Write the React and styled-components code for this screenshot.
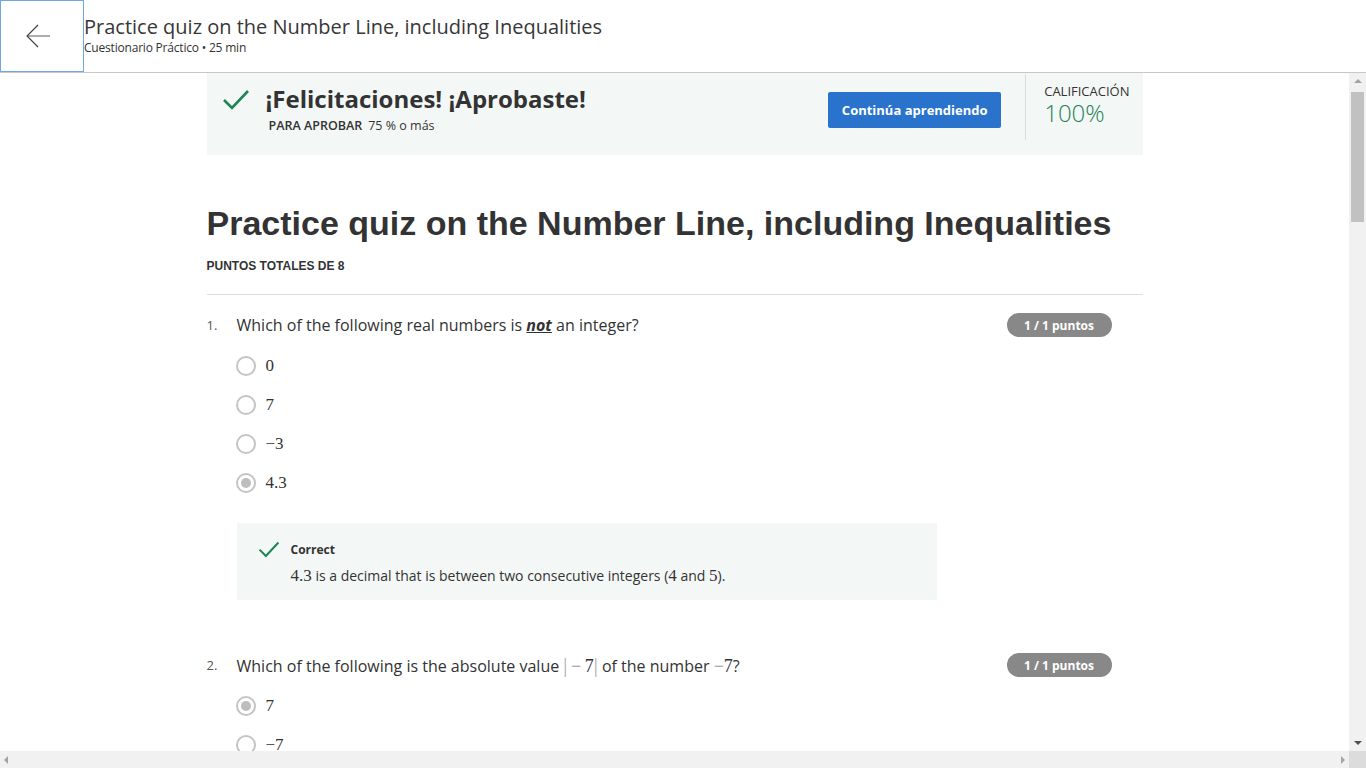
import React from 'react';
import styled, { createGlobalStyle } from 'styled-components';

const GlobalStyle = createGlobalStyle`
  html, body {
    margin: 0;
    padding: 0;
    overflow: hidden;
  }
  body {
    font-family: "Open Sans", "Liberation Sans", sans-serif;
    color: #333;
    background: #fff;
  }
`;

const Page = styled.div`
  display: flex;
  flex-direction: column;
  height: 100vh;
  width: 100vw;
`;

const Header = styled.header`
  display: flex;
  height: 72px;
  border-bottom: 1px solid #c8c8c8;
  flex-shrink: 0;
`;

const BackButton = styled.button`
  width: 84px;
  height: 72px;
  box-sizing: border-box;
  border: 1px solid #6ea7e8;
  background: #fff;
  padding: 0 0 1px 25px;
  display: flex;
  align-items: center;
  justify-content: flex-start;
  cursor: pointer;
`;

const HeaderText = styled.div`
  padding-top: 14px;
  display: flex;
  flex-direction: column;
`;

const HeaderTitle = styled.div`
  font-size: 20px;
  line-height: 26px;
  color: #373737;
`;

const HeaderSub = styled.div`
  font-size: 12px;
  line-height: 14px;
  letter-spacing: -0.2px;
  color: #333;
  margin-top: 1px;
`;

const Body = styled.div`
  flex: 1;
  display: flex;
  min-height: 0;
`;

const Scroller = styled.main`
  flex: 1;
  overflow: hidden;
  display: flex;
  justify-content: center;
`;

const Column = styled.div`
  width: 936px;
`;

const VBar = styled.div`
  width: 17px;
  background: #f1f1f1;
  display: flex;
  flex-direction: column;
  align-items: center;
`;

const Thumb = styled.div`
  width: 13px;
  height: 130px;
  background: #c1c1c1;
  margin-top: 9px;
`;

const Spacer = styled.div`
  flex: 1;
`;

const Arrow = styled.div`
  width: 0;
  height: 0;
  border: 4px solid transparent;
  ${({ $dir, $color }) => {
    const c = $color || '#a3a3a3';
    if ($dir === 'up') return `border-bottom-color: ${c}; border-top-width: 0; margin-top: 6px;`;
    if ($dir === 'down') return `border-top-color: ${c}; border-bottom-width: 0; margin-bottom: 6px;`;
    if ($dir === 'left') return `border-right-color: ${c}; border-left-width: 0; margin-left: 4px;`;
    return `border-left-color: ${c}; border-right-width: 0; margin-right: 4px;`;
  }}
`;

const HBar = styled.div`
  height: 17px;
  display: flex;
  flex-shrink: 0;
`;

const HTrack = styled.div`
  flex: 1;
  background: #f1f1f1;
  display: flex;
  align-items: center;
`;

const Corner = styled.div`
  width: 17px;
  background: #dcdcdc;
`;

const Banner = styled.section`
  display: flex;
  height: 82px;
  background: #f3f7f6;
  padding-left: 15px;
`;

const BannerLeft = styled.div`
  flex: 1;
  display: flex;
  align-items: flex-start;
  padding-top: 16px;
  gap: 16px;
`;

const BannerTexts = styled.div`
  margin-top: -6px;
`;

const BannerTitle = styled.div`
  font-size: 24px;
  line-height: 32px;
  font-weight: 700;
  color: #333;
`;

const PassLine = styled.div`
  font-size: 12.5px;
  line-height: 16px;
  margin-top: 3px;
  padding-left: 3px;
  color: #333;
  b {
    font-weight: 600;
    margin-right: 6px;
  }
`;

const PrimaryButton = styled.button`
  margin-top: 19px;
  width: 173px;
  height: 36px;
  border: none;
  border-radius: 2px;
  background: #2a73cc;
  color: #fff;
  font-family: "Open Sans", sans-serif;
  font-size: 13px;
  font-weight: 700;
  cursor: pointer;
`;

const Divider = styled.div`
  width: 1px;
  height: 66px;
  background: #dcdcdc;
  margin: 1px 0 0 24px;
`;

const Grade = styled.div`
  padding: 9px 13px 0 18px;
`;

const GradeLabel = styled.div`
  font-size: 13px;
  line-height: 18px;
  color: #333;
`;

const GradeValue = styled.div`
  font-size: 24px;
  line-height: 26px;
  font-weight: 300;
  color: #1f8354;
`;

const QuizTitle = styled.h1`
  font-family: "Liberation Sans", Arial, sans-serif;
  font-size: 34px;
  line-height: 40px;
  font-weight: 700;
  color: #333;
  margin: 48px 0 0;
`;

const TotalPoints = styled.div`
  font-family: "Liberation Sans", Arial, sans-serif;
  font-size: 12px;
  line-height: 16px;
  font-weight: 700;
  color: #333;
  margin-top: 15px;
  padding-bottom: 20px;
  border-bottom: 1px solid #dedede;
`;

const Question = styled.div`
  padding-top: ${({ $first }) => ($first ? '18px' : '53px')};
`;

const QuestionHead = styled.div`
  display: flex;
  align-items: center;
  height: 24px;
`;

const QNumber = styled.div`
  width: 30px;
  font-size: 13px;
  color: #555;
`;

const QText = styled.div`
  flex: 1;
  font-size: 16px;
  color: #333;
  em {
    font-weight: 700;
    font-style: italic;
    text-decoration: underline;
  }
`;

const Badge = styled.div`
  width: 105px;
  height: 24px;
  border-radius: 12px;
  background: #888;
  color: #fff;
  font-size: 12px;
  font-weight: 700;
  display: flex;
  align-items: center;
  justify-content: center;
  margin-right: 31px;
`;

const Options = styled.div`
  margin: 9px 0 0 29px;
`;

const Option = styled.label`
  display: flex;
  align-items: center;
  height: 39px;
  gap: 10px;
`;

const Radio = styled.span`
  width: 20px;
  height: 20px;
  box-sizing: border-box;
  border-radius: 50%;
  border: 2px solid #c4c4c4;
  display: flex;
  align-items: center;
  justify-content: center;
  &::after {
    content: '';
    width: 10px;
    height: 10px;
    border-radius: 50%;
    background: ${({ $checked }) => ($checked ? '#bdbdbd' : 'transparent')};
  }
`;

const MathText = styled.span`
  font-family: "Liberation Serif", "DejaVu Serif", serif;
  font-size: ${({ $size }) => $size || '17px'};
  color: ${({ $tone }) => $tone || '#333'};
`;

const Feedback = styled.div`
  margin: 21px 0 0 30px;
  width: 700px;
  height: 77px;
  box-sizing: border-box;
  background: #f3f7f6;
  display: flex;
  padding: 18px 0 0 21px;
  gap: 11px;
`;

const FeedbackTitle = styled.div`
  font-size: 12px;
  line-height: 18px;
  font-weight: 700;
  color: #333;
`;

const FeedbackText = styled.div`
  font-size: 14px;
  line-height: 20px;
  margin-top: 7px;
  color: #333;
`;

const Check = ({ size = 28 }) => (
  <svg width={size} height={size * 0.75} viewBox="0 0 28 21" fill="none">
    <path d="M2 11 L10 19 L26 2" stroke="#1f8354" strokeWidth="2.6" />
  </svg>
);

const BackArrow = () => (
  <svg width="24" height="24" viewBox="0 0 24 24" fill="none">
    <path d="M1.5 12 H24" stroke="#999" strokeWidth="1.6" />
    <path d="M12 1 L1 12 L12 23" stroke="#444" strokeWidth="1.2" />
  </svg>
);

const questions = [
  {
    n: 1,
    text: (
      <>Which of the following real numbers is <em>not</em> an integer?</>
    ),
    options: ['0', '7', '\u22123', '4.3'],
    checked: 3,
    feedback: true,
  },
  {
    n: 2,
    text: (
      <>
        Which of the following is the absolute value{' '}
        <MathText $size="18px">
          <MathText $size="20px" $tone="#aaa">|</MathText>
          <MathText $size="18px" $tone="#999">&thinsp;&minus;&thinsp;</MathText>7
          <MathText $size="20px" $tone="#aaa">|</MathText>
        </MathText>{' '}
        of the number{' '}
        <MathText $size="18px">
          <MathText $size="18px" $tone="#999">&minus;</MathText>7
        </MathText>
        ?
      </>
    ),
    options: ['7', '\u22127'],
    checked: 0,
  },
];

export default function App() {
  return (
    <Page>
      <GlobalStyle />
      <Header>
        <BackButton aria-label="Volver">
          <BackArrow />
        </BackButton>
        <HeaderText>
          <HeaderTitle>Practice quiz on the Number Line, including Inequalities</HeaderTitle>
          <HeaderSub>Cuestionario Práctico • 25 min</HeaderSub>
        </HeaderText>
      </Header>
      <Body>
        <Scroller>
          <Column>
            <Banner>
              <BannerLeft>
                <Check />
                <BannerTexts>
                  <BannerTitle>¡Felicitaciones! ¡Aprobaste!</BannerTitle>
                  <PassLine>
                    <b>PARA APROBAR</b>75 % o más
                  </PassLine>
                </BannerTexts>
              </BannerLeft>
              <PrimaryButton>Continúa aprendiendo</PrimaryButton>
              <Divider />
              <Grade>
                <GradeLabel>CALIFICACIÓN</GradeLabel>
                <GradeValue>100%</GradeValue>
              </Grade>
            </Banner>
            <QuizTitle>Practice quiz on the Number Line, including Inequalities</QuizTitle>
            <TotalPoints>PUNTOS TOTALES DE 8</TotalPoints>
            {questions.map((q, qi) => (
              <Question key={q.n} $first={qi === 0}>
                <QuestionHead>
                  <QNumber>{q.n}.</QNumber>
                  <QText>{q.text}</QText>
                  <Badge>1 / 1 puntos</Badge>
                </QuestionHead>
                <Options>
                  {q.options.map((o, i) => (
                    <Option key={i}>
                      <Radio $checked={i === q.checked} />
                      <MathText>{o}</MathText>
                    </Option>
                  ))}
                </Options>
                {q.feedback && (
                  <Feedback>
                    <Check size={22} />
                    <div>
                      <FeedbackTitle>Correct</FeedbackTitle>
                      <FeedbackText>
                        <MathText>4.3</MathText> is a decimal that is between two consecutive integers (
                        <MathText>4</MathText> and <MathText>5</MathText>).
                      </FeedbackText>
                    </div>
                  </Feedback>
                )}
              </Question>
            ))}
          </Column>
        </Scroller>
        <VBar>
          <Arrow $dir="up" $color="#a3a3a3" />
          <Thumb />
          <Spacer />
          <Arrow $dir="down" $color="#505050" />
        </VBar>
      </Body>
      <HBar>
        <HTrack>
          <Arrow $dir="left" />
          <Spacer />
          <Arrow $dir="right" />
        </HTrack>
        <Corner />
      </HBar>
    </Page>
  );
}
